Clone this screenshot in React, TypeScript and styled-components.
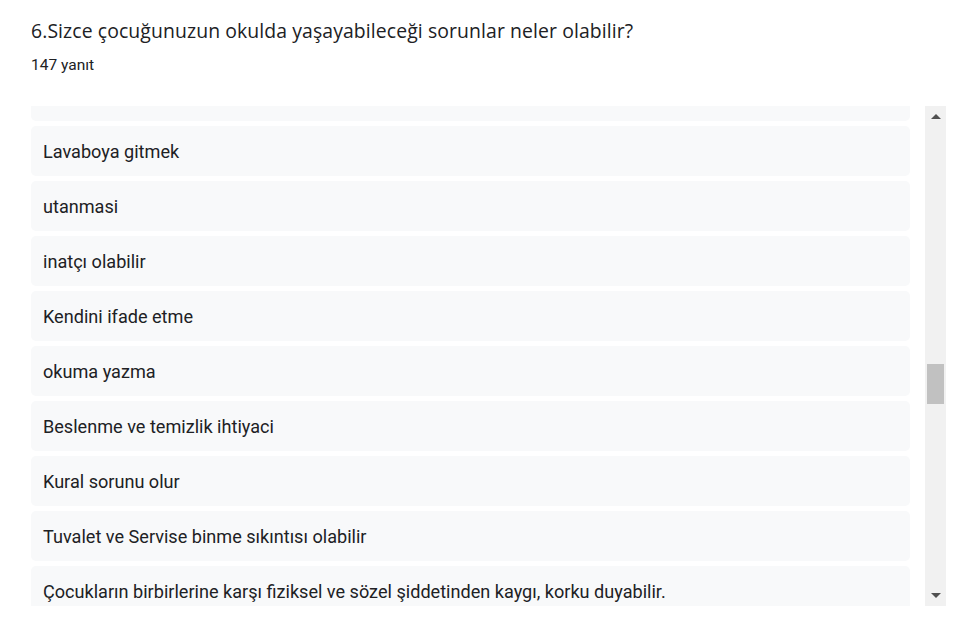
import { useLayoutEffect, useRef } from "react";
import styled, { createGlobalStyle } from "styled-components";

const GlobalStyle = createGlobalStyle`
    html, body {
        margin: 0;
        padding: 0;
        background: #ffffff;
    }
    body {
        font-family: Roboto, "Noto Sans", Arial, sans-serif;
        color: #202124;
    }
`

const Page = styled.div`
    padding: 19px 9px 0 31px;
`

const Title = styled.h1`
    margin: 0;
    font-family: "Open Sans", Roboto, sans-serif;
    font-weight: 400;
    font-size: 19.4px;
    line-height: 24px;
    letter-spacing: 0.1px;
    color: #202124;
`

const Count = styled.div`
    margin-top: 11px;
    font-size: 15.5px;
    line-height: 22px;
    color: #202124;
`

const Panel = styled.div`
    margin-top: 30px;
    display: flex;
    gap: 15px;
    height: 500px;
`

const List = styled.div`
    flex: 1;
    overflow: hidden;
    display: flex;
    flex-direction: column;
    gap: 5px;
`

const Item = styled.div`
    flex: 0 0 50px;
    display: flex;
    align-items: center;
    padding: 0 12px;
    background: #f8f9fa;
    border-radius: 5px;
    font-size: 18.1px;
    color: #202124;
    white-space: nowrap;
`

const Track = styled.div`
    width: 21px;
    background: #f1f1f1;
    display: flex;
    flex-direction: column;
    align-items: center;
`

const Arrow = styled.div<{ down?: boolean }>`
    height: 21px;
    width: 21px;
    display: flex;
    align-items: center;
    justify-content: center;
    &::before {
        content: "";
        border-left: 5px solid transparent;
        border-right: 5px solid transparent;
        ${(p) => (p.down ? "border-top: 5px solid #505050;" : "border-bottom: 5px solid #505050;")}
    }
`

const Rail = styled.div`
    flex: 1;
    width: 100%;
    display: flex;
    justify-content: center;
`

const Thumb = styled.div`
    width: 17px;
    height: 40px;
    background: #c1c1c1;
`

const answers = [
    "",
    "Lavaboya gitmek",
    "utanmasi",
    "inatçı olabilir",
    "Kendini ifade etme",
    "okuma yazma",
    "Beslenme ve temizlik ihtiyaci",
    "Kural sorunu olur",
    "Tuvalet ve Servise binme sıkıntısı olabilir",
    "Çocukların birbirlerine karşı fiziksel ve sözel şiddetinden kaygı, korku duyabilir.",
]

export default function App() {
    const listRef = useRef<HTMLDivElement>(null)

    useLayoutEffect(() => {
        if (listRef.current) listRef.current.scrollTop = 35
    }, [])

    return (
        <>
            <GlobalStyle />
            <Page>
                <Title>6.Sizce çocuğunuzun okulda yaşayabileceği sorunlar neler olabilir?</Title>
                <Count>147 yanıt</Count>
                <Panel>
                    <List ref={listRef}>
                        {answers.map((a, i) => (
                            <Item key={i}>{a}</Item>
                        ))}
                    </List>
                    <Track>
                        <Arrow />
                        <Rail>
                            <Thumb style={{ marginTop: 237 }} />
                        </Rail>
                        <Arrow down />
                    </Track>
                </Panel>
            </Page>
        </>
    )
}
